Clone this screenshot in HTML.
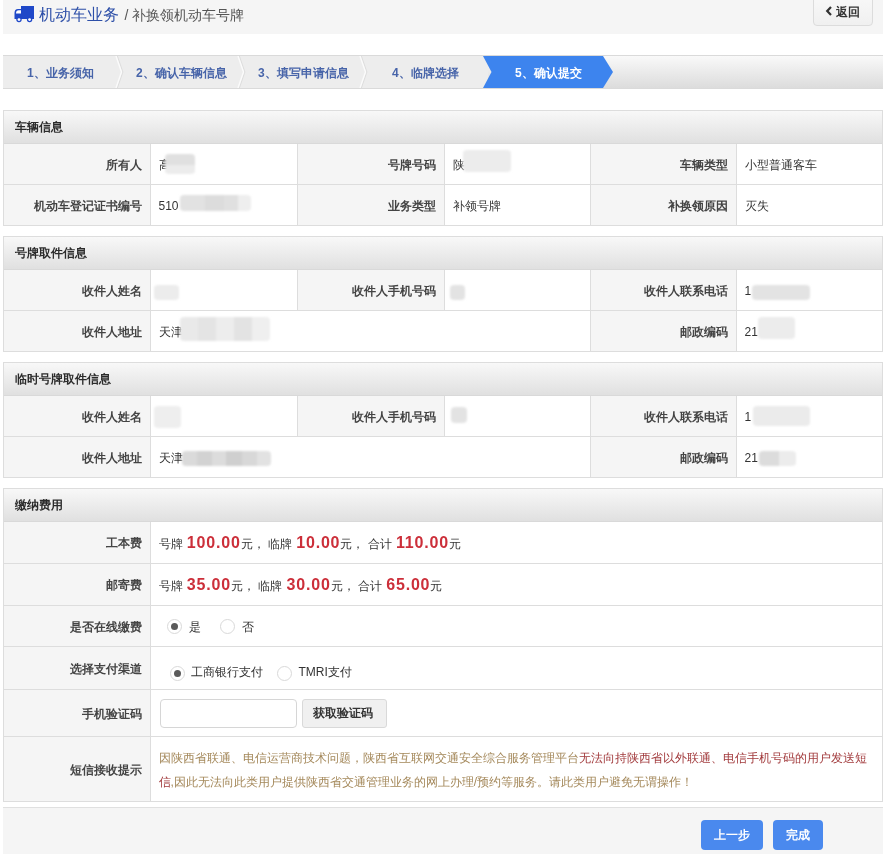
<!DOCTYPE html>
<html><head><meta charset="utf-8">
<style>
*{box-sizing:border-box}
html,body{margin:0;padding:0;background:#fff;width:889px;height:854px;overflow:hidden}
body{font-family:"Liberation Sans",sans-serif;font-size:12px;color:#333;position:relative}
.hdr{will-change:transform;position:absolute;left:3px;top:0;width:880px;height:34px;background:#f5f5f5}
.truck{position:absolute;left:11px;top:6px}
.ttl{position:absolute;left:36px;top:5px;font-size:16px;color:#2d4fa8;line-height:20px;white-space:nowrap}
.ttl span{font-size:14px;color:#555;margin-left:1px}
.back{position:absolute;left:810px;top:-4px;width:60px;height:30px;border:1px solid #dcdcdc;border-radius:4px;background:linear-gradient(#f8f8f8,#f0f0f0);font-weight:bold;color:#333;font-size:12px;line-height:20px}
.back svg{position:absolute;left:11px;top:9px}
.back span{position:absolute;left:22px;top:5px}
.steps{will-change:transform;position:absolute;left:3px;top:55px;width:880px;height:34px;border-top:1px solid #dadada;border-bottom:1px solid #dadada;background:linear-gradient(#f9f9f9,#dcdcdc);overflow:hidden}
.steps svg{position:absolute;left:0;top:0}
.step{position:absolute;top:1px;height:32px;line-height:32px;font-weight:bold;color:#4764a9;font-size:12px;white-space:nowrap}
.panel{will-change:transform;position:absolute;left:3px;width:880px;border:1px solid #ddd;background:#fff}
.ph{height:33px;line-height:33px;padding-left:11px;font-weight:bold;color:#2b2b2b;background:linear-gradient(#f8f8f8,#e0e0e0);border-bottom:1px solid #d9d9d9}
table{border-collapse:collapse;width:100%;table-layout:fixed}
td{border-top:1px solid #ddd;height:41px;padding:3px 8px 0 8px;font-size:12px;color:#333;position:relative;white-space:nowrap}
tr:first-child td{border-top:0;height:40px}
td.l{background:#f5f5f5;text-align:right;font-weight:bold;color:#444;border-right:1px solid #ddd}
td.v{border-right:1px solid #ddd}
td:last-child{border-right:0}
.b{position:absolute;background:#e3e3e3;border-radius:4px;filter:blur(0.8px)}
.amt{color:#cc2f3a;font-weight:bold;font-size:16px;letter-spacing:0.8px;margin-left:1px}
.radio{position:absolute;width:15px;height:15px;border:1px solid #d9d9d9;border-radius:50%;background:#fff}
.rt{position:absolute;line-height:14px;font-size:12px;color:#333}
.radio.on:after{content:"";position:absolute;left:3px;top:3px;width:7px;height:7px;border-radius:50%;background:#5a5a5a}
.inp{display:inline-block;width:137px;height:29px;border:1px solid #d6d6d6;border-radius:4px;vertical-align:middle;position:relative;left:1px;top:-1px}
.btn{display:inline-block;width:85px;height:29px;padding-right:2px;border:1px solid #d9d9d9;border-radius:3px;background:#f0f0f0;vertical-align:middle;text-align:center;line-height:27px;font-weight:bold;margin-left:5px;position:relative;left:1px;top:-1px}
.warn{color:#a4885a}
.dang{color:#a23b3d}
.foot{will-change:transform;position:absolute;left:3px;top:807px;width:880px;height:60px;background:#f5f5f5;border-top:1px solid #e0e0e0}
.pbtn{position:absolute;top:12px;height:30px;border-radius:4px;background:#4a89ee;color:#fff;font-weight:bold;text-align:center;line-height:30px;font-size:12px}
</style></head><body>
<div class="hdr">
  <svg class="truck" width="21" height="17" viewBox="0 0 21 17"><g fill="#1f48c8">
  <rect x="7" y="0" width="13" height="13"/>
  <path d="M0.5 13 V7 Q0.5 3 4 3 H8 V13 Z"/>
  <circle cx="5" cy="13.6" r="2.7"/><circle cx="15.6" cy="13.6" r="2.7"/></g>
  <path d="M2 7.5 Q2 4.3 4.8 4.3 H7 V7.5 Z" fill="#fff"/>
  <circle cx="5" cy="13.6" r="1.4" fill="#fff"/><circle cx="15.6" cy="13.6" r="1.4" fill="#fff"/>
  </svg>
  <div class="ttl">机动车业务 <span>/ 补换领机动车号牌</span></div>
  <div class="back"><svg width="8" height="10" viewBox="0 0 8 10"><path d="M6 1 L2.2 5 L6 9" fill="none" stroke="#333" stroke-width="2.2"/></svg><span>返回</span></div>
</div>
<div class="steps">
  <svg width="880" height="32" viewBox="0 0 880 32">
    <rect x="0" y="0" width="485" height="32" fill="#ededed"/>
    <polyline points="114.3,0 119.8,16 114.3,32" fill="none" stroke="#dedede" stroke-width="1.2"/><polyline points="113,0 118.5,16 113,32" fill="none" stroke="#fbfbfb" stroke-width="1.4"/>
    <polyline points="236.3,0 241.8,16 236.3,32" fill="none" stroke="#dedede" stroke-width="1.2"/><polyline points="235,0 240.5,16 235,32" fill="none" stroke="#fbfbfb" stroke-width="1.4"/>
    <polyline points="358.3,0 363.8,16 358.3,32" fill="none" stroke="#dedede" stroke-width="1.2"/><polyline points="357,0 362.5,16 357,32" fill="none" stroke="#fbfbfb" stroke-width="1.4"/>
    <polygon points="480,0 600,0 610,16 600,32 480,32 488.5,16" fill="#3d84ee"/>
  </svg>
  <div class="step" style="left:24px">1、业务须知</div>
  <div class="step" style="left:133px">2、确认车辆信息</div>
  <div class="step" style="left:255px">3、填写申请信息</div>
  <div class="step" style="left:389px">4、临牌选择</div>
  <div class="step" style="left:512px;color:#fff">5、确认提交</div>
</div>

<div class="panel" style="top:110px">
  <div class="ph">车辆信息</div>
  <table><colgroup><col style="width:146px"><col style="width:147px"><col style="width:147px"><col style="width:146px"><col style="width:146px"><col></colgroup>
  <tr><td class="l">所有人</td><td class="v">高<i class="b" style="left:14px;top:10px;width:30px;height:20px;background:linear-gradient(#e0e0e0 0 55%,#ececec 55%)"></i></td><td class="l">号牌号码</td><td class="v">陕<i class="b" style="left:18px;top:6px;width:48px;height:22px;background:#ececec"></i></td><td class="l">车辆类型</td><td class="v">小型普通客车</td></tr>
  <tr><td class="l">机动车登记证书编号</td><td class="v">510<i class="b" style="left:29px;top:10px;width:71px;height:16px;background:linear-gradient(90deg,#e2e2e2 0 35%,#dcdcdc 35% 62%,#e0e0e0 62% 82%,#eeeeee 82%)"></i></td><td class="l">业务类型</td><td class="v">补领号牌</td><td class="l">补换领原因</td><td class="v">灭失</td></tr>
  </table>
</div>

<div class="panel" style="top:236px">
  <div class="ph">号牌取件信息</div>
  <table><colgroup><col style="width:146px"><col style="width:147px"><col style="width:147px"><col style="width:146px"><col style="width:146px"><col></colgroup>
  <tr><td class="l">收件人姓名</td><td class="v"><i class="b" style="left:3px;top:15px;width:25px;height:15px;background:#ececec"></i></td><td class="l">收件人手机号码</td><td class="v"><i class="b" style="left:5px;top:15px;width:15px;height:15px"></i></td><td class="l">收件人联系电话</td><td class="v">1<i class="b" style="left:15px;top:15px;width:58px;height:15px"></i></td></tr>
  <tr><td class="l">收件人地址</td><td class="v" colspan="3">天津<i class="b" style="left:29px;top:6px;width:90px;height:24px;background:linear-gradient(90deg,#e9e9e9 0 20%,#e4e4e4 20% 40%,#ededed 40% 60%,#e3e3e3 60% 80%,#efefef 80%)"></i></td><td class="l">邮政编码</td><td class="v">21<i class="b" style="left:21px;top:6px;width:37px;height:22px;background:#ececec"></i></td></tr>
  </table>
</div>

<div class="panel" style="top:362px">
  <div class="ph">临时号牌取件信息</div>
  <table><colgroup><col style="width:146px"><col style="width:147px"><col style="width:147px"><col style="width:146px"><col style="width:146px"><col></colgroup>
  <tr><td class="l">收件人姓名</td><td class="v"><i class="b" style="left:3px;top:10px;width:27px;height:22px;background:#eee"></i></td><td class="l">收件人手机号码</td><td class="v"><i class="b" style="left:6px;top:11px;width:16px;height:16px"></i></td><td class="l">收件人联系电话</td><td class="v">1<i class="b" style="left:16px;top:10px;width:57px;height:20px;background:#ebebeb"></i></td></tr>
  <tr><td class="l">收件人地址</td><td class="v" colspan="3">天津<i class="b" style="left:31px;top:14px;width:89px;height:15px;background:linear-gradient(90deg,#dadada 0 17%,#d2d2d2 17% 34%,#dcdcdc 34% 50%,#cfcfcf 50% 67%,#d8d8d8 67% 84%,#e2e2e2 84%)"></i></td><td class="l">邮政编码</td><td class="v">21<i class="b" style="left:22px;top:14px;width:37px;height:15px;background:linear-gradient(90deg,#dcdcdc 0 55%,#ececec 55%)"></i></td></tr>
  </table>
</div>

<div class="panel" style="top:488px">
  <div class="ph">缴纳费用</div>
  <table>
  <colgroup><col style="width:146px"><col></colgroup>
  <tr><td class="l" style="height:41px">工本费</td><td>号牌 <span class="amt">100.00</span>元， 临牌 <span class="amt">10.00</span>元， 合计 <span class="amt">110.00</span>元</td></tr>
  <tr><td class="l" style="height:42px">邮寄费</td><td>号牌 <span class="amt">35.00</span>元， 临牌 <span class="amt">30.00</span>元， 合计 <span class="amt">65.00</span>元</td></tr>
  <tr><td class="l" style="height:41px">是否在线缴费</td><td><span class="radio on" style="left:16px;top:13px"></span><span class="rt" style="left:38px;top:14px">是</span><span class="radio" style="left:69px;top:13px"></span><span class="rt" style="left:91px;top:14px">否</span></td></tr>
  <tr><td class="l" style="height:43px">选择支付渠道</td><td><span class="radio on" style="left:19px;top:19px"></span><span class="rt" style="left:40px;top:18px">工商银行支付</span><span class="radio" style="left:126px;top:19px"></span><span class="rt" style="left:148px;top:18px">TMRI支付</span></td></tr>
  <tr><td class="l" style="height:47px">手机验证码</td><td><span class="inp"></span><span class="btn">获取验证码</span></td></tr>
  <tr><td class="l" style="height:65px">短信接收提示</td><td style="white-space:normal;line-height:24px"><span class="warn">因陕西省联通、电信运营商技术问题，陕西省互联网交通安全综合服务管理平台</span><span class="dang">无法向持陕西省以外联通、电信手机号码的用户发送短信</span><span class="warn">,因此无法向此类用户提供陕西省交通管理业务的网上办理/预约等服务。请此类用户避免无谓操作！</span></td></tr>
  </table>
</div>

<div class="foot">
  <div class="pbtn" style="left:698px;width:62px">上一步</div>
  <div class="pbtn" style="left:770px;width:50px">完成</div>
</div>
</body></html>
